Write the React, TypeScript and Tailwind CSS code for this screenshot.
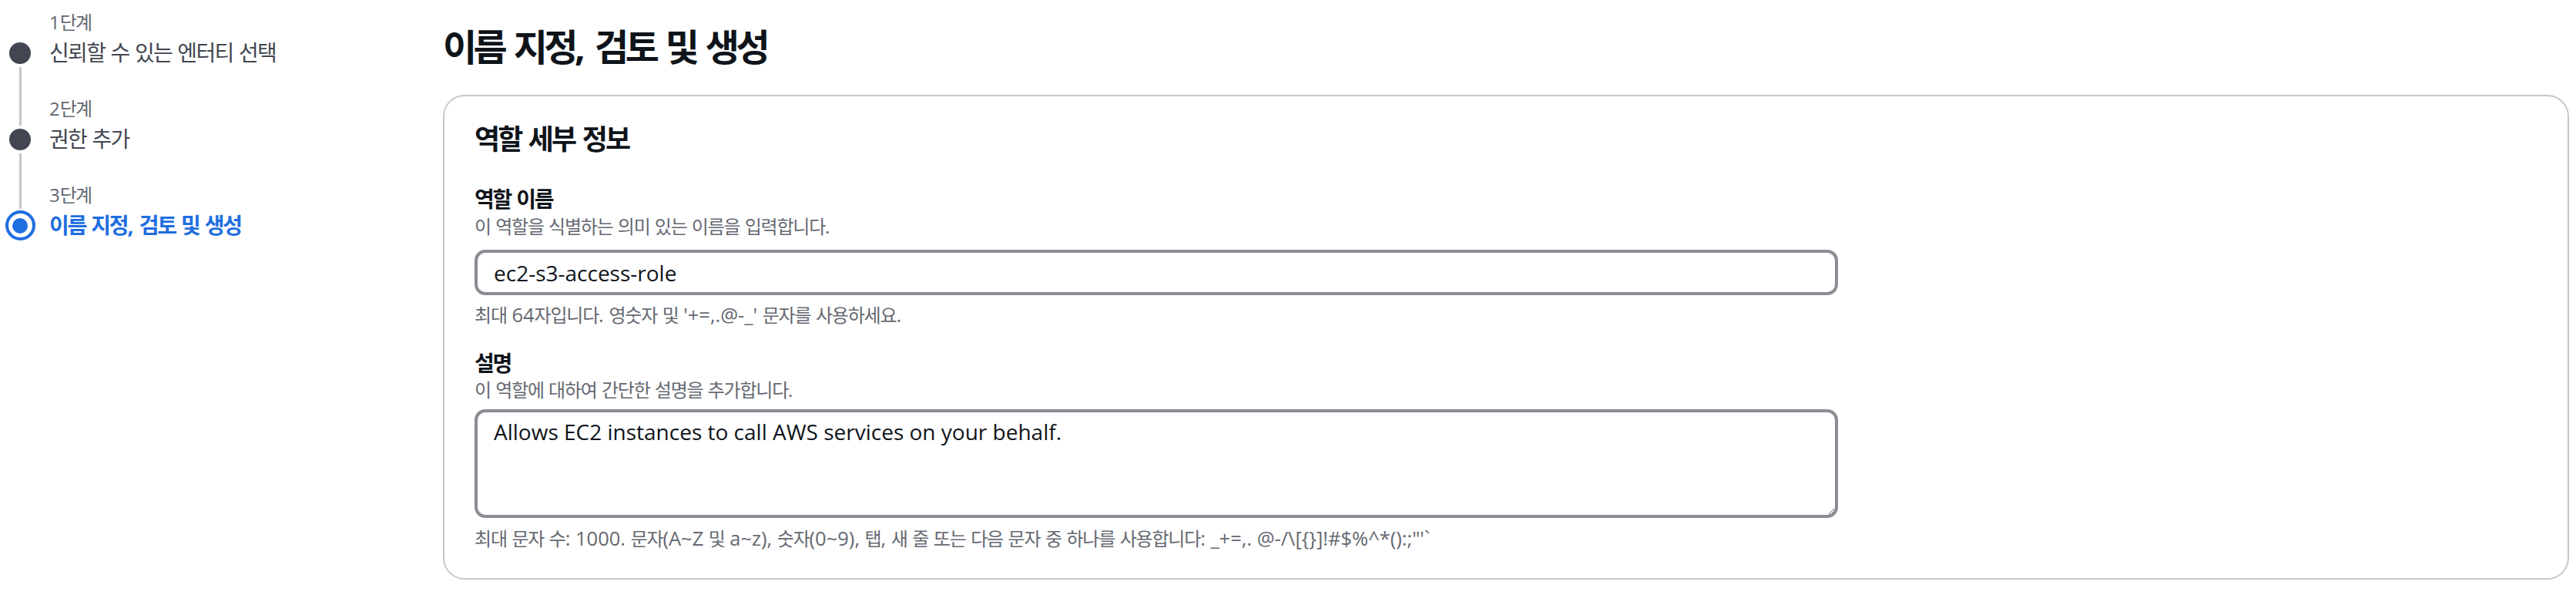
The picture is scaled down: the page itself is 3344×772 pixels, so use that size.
const HANGUL = /([\uAC00-\uD7A3]+)/;

// Korean runs are narrower in the reference than in Noto CJK, so squeeze them a bit
const Ko = ({ children, k = "tracking-[-0.06em] leading-none" }: { children: string; k?: string }) => (
  <>
    {children.split(HANGUL).map((part, i) =>
      i % 2 === 1 ? (
        <span key={i} className={k}>
          {part}
        </span>
      ) : (
        part
      )
    )}
  </>
);

const BOLD = "tracking-[-0.08em] leading-none";
const HINT = "text-[24px] tracking-[-0.05em] leading-none";

const steps = [
  { label: "1단계", title: "신뢰할 수 있는 엔터티 선택", active: false },
  { label: "2단계", title: "권한 추가", active: false },
  { label: "3단계", title: "이름 지정, 검토 및 생성", active: true },
];

const StepNav = () => {
  return (
    <nav className="w-[575px] shrink-0 pt-[15px]">
      <ul>
        {steps.map((step, i) => {
          const first = i === 0;
          const last = i === steps.length - 1;
          return (
            <li key={step.label} className="flex">
              <div className="w-[52px] shrink-0 flex flex-col items-center">
                <div className="h-[36px] w-[3px]">
                  {!first && (
                    <div className={`w-[3px] bg-[#c6c6cd] ${step.active ? "h-[32px]" : "h-[36px]"}`} />
                  )}
                </div>
                <div className="h-[35px] flex items-center justify-center">
                  {step.active ? (
                    <div className="w-[39px] h-[39px] shrink-0 rounded-full border-4 border-[#1f6ee0] flex items-center justify-center">
                      <div className="w-[20px] h-[20px] rounded-full bg-[#1f6ee0]" />
                    </div>
                  ) : (
                    <div className="w-[28px] h-[28px] rounded-full bg-[#424650]" />
                  )}
                </div>
                <div className="flex-1 w-[3px] pt-[1px]">
                  {!last && <div className="w-[3px] h-full bg-[#c6c6cd]" />}
                </div>
              </div>
              <div className={`ml-3 ${last ? "" : "pb-[41px]"}`}>
                <div className="text-[24px] leading-[28px] text-[#656871]">
                  <Ko k={BOLD}>{step.label}</Ko>
                </div>
                <div
                  className={`mt-2 text-[28px] leading-[35px] ${
                    step.active ? "font-bold text-[#1f6ee0]" : "text-[#424650]"
                  }`}
                >
                  <Ko k={step.active ? BOLD : undefined}>{step.title}</Ko>
                </div>
              </div>
            </li>
          );
        })}
      </ul>
    </nav>
  );
};

const App = () => {
  return (
    <div className="min-h-[772px] bg-white flex font-['Open_Sans','Noto_Sans_CJK_KR',sans-serif] text-[#0f141a]">
      <StepNav />
      <main className="flex-1 min-w-0 pt-[35px] pr-[9px]">
        <h1 className="text-[48px] leading-[52px] font-bold">
          <Ko k="tracking-[-0.095em] leading-none">이름 지정, 검토 및 생성</Ko>
        </h1>
        <section className="mt-[36px] border-2 border-[#c6c6cd] rounded-[28px] pt-[37px] pl-[39px] pr-[38px] pb-[38px]">
          <h2 className="text-[36px] leading-[38px] font-bold">
            <Ko k={BOLD}>역할 세부 정보</Ko>
          </h2>

          <div className="mt-[41px]">
            <label htmlFor="role-name" className="block text-[28px] leading-[35px] font-bold">
              <Ko k={BOLD}>역할 이름</Ko>
            </label>
            <p className="mt-[4px] text-[24px] leading-[28px] text-[#656871]">
              <Ko k={HINT}>이 역할을 식별하는 의미 있는 이름을 입력합니다.</Ko>
            </p>
            <input
              id="role-name"
              readOnly
              defaultValue="ec2-s3-access-role"
              className="mt-[16px] block w-[1770px] h-[59px] border-4 border-[#8c8c94] rounded-[14px] px-[21px] text-[28px] text-[#0f141a] outline-none"
            />
            <p className="mt-[11px] text-[25.5px] leading-[28px] text-[#656871]">
              <Ko k={HINT}>최대 64자입니다. 영숫자 및 '+=,.@-_' 문자를 사용하세요.</Ko>
            </p>
          </div>

          <div className="mt-[32px]">
            <label htmlFor="role-desc" className="block text-[28px] leading-[35px] font-bold">
              <Ko k={BOLD}>설명</Ko>
            </label>
            <p className="mt-[3px] text-[24px] leading-[28px] text-[#656871]">
              <Ko k={HINT}>이 역할에 대하여 간단한 설명을 추가합니다.</Ko>
            </p>
            <textarea
              id="role-desc"
              readOnly
              defaultValue="Allows EC2 instances to call AWS services on your behalf."
              className="mt-[11px] block w-[1770px] h-[141px] border-4 border-[#8c8c94] rounded-[14px] px-[21px] pt-[8px] text-[28px] leading-[35px] text-[#0f141a] outline-none"
            />
            <p className="mt-[12px] text-[25.5px] leading-[28px] text-[#656871]">
              <Ko k={HINT}>
                {"최대 문자 수: 1000. 문자(A~Z 및 a~z), 숫자(0~9), 탭, 새 줄 또는 다음 문자 중 하나를 사용합니다: _+=,. @-/\\[{}]!#$%^*():;\"'`"}
              </Ko>
            </p>
          </div>
        </section>
      </main>
    </div>
  );
};

export default App;
